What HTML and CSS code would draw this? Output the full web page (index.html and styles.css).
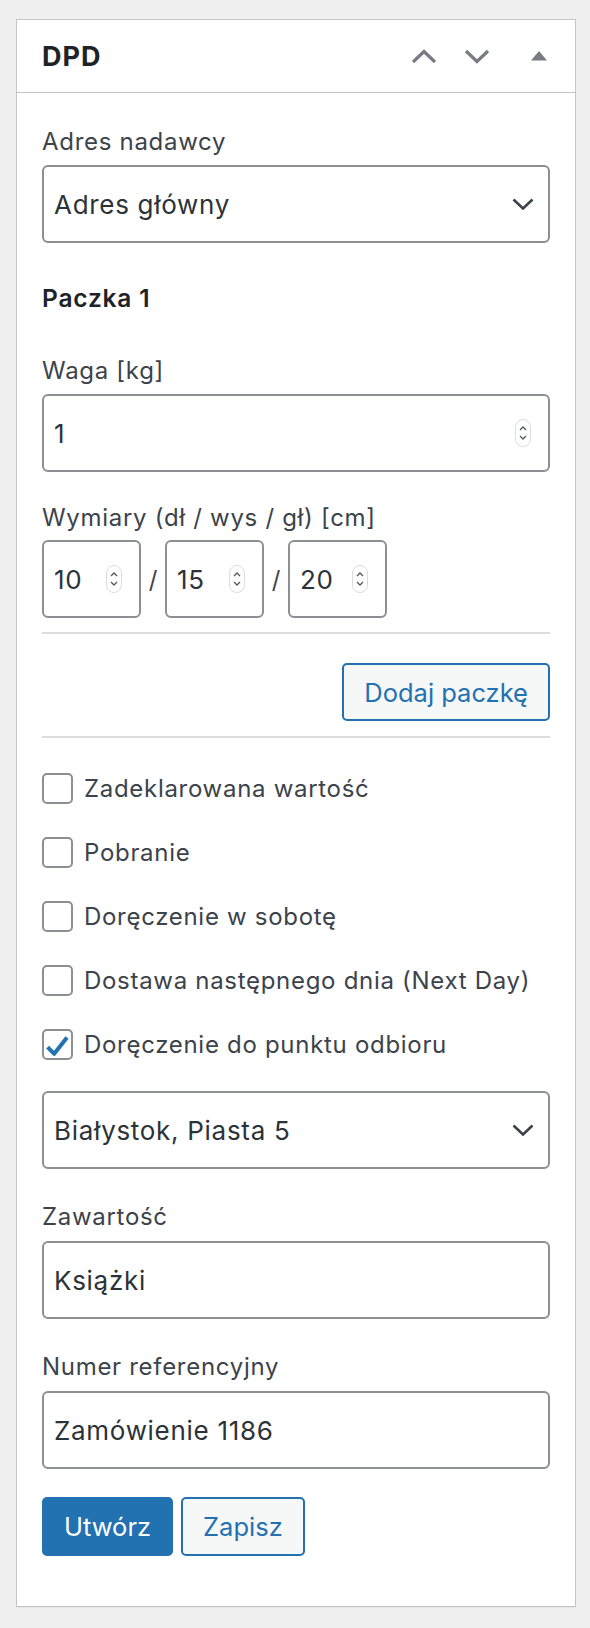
FILE: index.html
```html
<!DOCTYPE html>
<html lang="pl">
<head>
<meta charset="utf-8">
<title>DPD</title>
<link rel="stylesheet" href="styles.css">
</head>
<body>
<div class="postbox">
  <div class="postbox-header">
    <h2 class="postbox-title">DPD</h2>
    <div class="handle-actions">
      <span class="handle-btn handle-higher">
        <svg width="26" height="15" viewBox="0 0 26 15"><polyline points="2,13 13,2.5 24,13" fill="none" stroke="#787c82" stroke-width="3.2"/></svg>
      </span>
      <span class="handle-btn handle-lower">
        <svg width="26" height="15" viewBox="0 0 26 15"><polyline points="2,2 13,12.5 24,2" fill="none" stroke="#787c82" stroke-width="3.2"/></svg>
      </span>
      <span class="handle-btn handle-toggle">
        <svg width="16" height="10" viewBox="0 0 16 10"><polygon points="0,9.5 8,0 16,9.5" fill="#787c82"/></svg>
      </span>
    </div>
  </div>
  <div class="inside">
    <div class="field">
      <div class="field-label">Adres nadawcy</div>
      <div class="control select">
        <span class="control-value">Adres główny</span>
        <svg class="select-arrow" width="22" height="12" viewBox="0 0 22 12"><polyline points="1.5,1.5 11,10.5 20.5,1.5" fill="none" stroke="#3c434a" stroke-width="2.6"/></svg>
      </div>
    </div>

    <h4 class="package-title">Paczka 1</h4>

    <div class="field">
      <div class="field-label">Waga [kg]</div>
      <div class="control number">
        <span class="control-value">1</span>
        <svg class="spinner" width="16" height="28" viewBox="0 0 16 28"><rect x="0.5" y="0.5" width="15" height="27" rx="7.5" fill="#fff" stroke="#dcdcde"/><polyline points="5,11 8,8 11,11" fill="none" stroke="#50575e" stroke-width="1.3"/><polyline points="5,17 8,20 11,17" fill="none" stroke="#50575e" stroke-width="1.3"/></svg>
      </div>
    </div>

    <div class="field field-dims">
      <div class="field-label">Wymiary (dł / wys / gł) [cm]</div>
      <div class="dims">
        <div class="control number dim">
          <span class="control-value">10</span>
          <svg class="spinner" width="16" height="28" viewBox="0 0 16 28"><rect x="0.5" y="0.5" width="15" height="27" rx="7.5" fill="#fff" stroke="#dcdcde"/><polyline points="5,11 8,8 11,11" fill="none" stroke="#50575e" stroke-width="1.3"/><polyline points="5,17 8,20 11,17" fill="none" stroke="#50575e" stroke-width="1.3"/></svg>
        </div>
        <span class="dim-sep">/</span>
        <div class="control number dim">
          <span class="control-value">15</span>
          <svg class="spinner" width="16" height="28" viewBox="0 0 16 28"><rect x="0.5" y="0.5" width="15" height="27" rx="7.5" fill="#fff" stroke="#dcdcde"/><polyline points="5,11 8,8 11,11" fill="none" stroke="#50575e" stroke-width="1.3"/><polyline points="5,17 8,20 11,17" fill="none" stroke="#50575e" stroke-width="1.3"/></svg>
        </div>
        <span class="dim-sep">/</span>
        <div class="control number dim">
          <span class="control-value">20</span>
          <svg class="spinner" width="16" height="28" viewBox="0 0 16 28"><rect x="0.5" y="0.5" width="15" height="27" rx="7.5" fill="#fff" stroke="#dcdcde"/><polyline points="5,11 8,8 11,11" fill="none" stroke="#50575e" stroke-width="1.3"/><polyline points="5,17 8,20 11,17" fill="none" stroke="#50575e" stroke-width="1.3"/></svg>
        </div>
      </div>
    </div>

    <hr class="separator separator-top">
    <div class="add-row">
      <span class="button button-secondary">Dodaj paczkę</span>
    </div>
    <hr class="separator separator-bottom">

    <ul class="options">
      <li class="option"><span class="checkbox"></span><span class="option-label">Zadeklarowana wartość</span></li>
      <li class="option"><span class="checkbox"></span><span class="option-label">Pobranie</span></li>
      <li class="option"><span class="checkbox"></span><span class="option-label">Doręczenie w sobotę</span></li>
      <li class="option"><span class="checkbox"></span><span class="option-label">Dostawa następnego dnia (Next Day)</span></li>
      <li class="option"><span class="checkbox is-checked"><svg width="27" height="27" viewBox="0 0 27 27"><polyline points="3.6,16.2 10.2,22.8 23,6.6" fill="none" stroke="#2271b1" stroke-width="4" stroke-linejoin="round"/></svg></span><span class="option-label">Doręczenie do punktu odbioru</span></li>
    </ul>

    <div class="control select select-point">
      <span class="control-value">Białystok, Piasta 5</span>
      <svg class="select-arrow" width="22" height="12" viewBox="0 0 22 12"><polyline points="1.5,1.5 11,10.5 20.5,1.5" fill="none" stroke="#3c434a" stroke-width="2.6"/></svg>
    </div>

    <div class="field field-text">
      <div class="field-label">Zawartość</div>
      <div class="control text"><span class="control-value">Książki</span></div>
    </div>

    <div class="field field-text">
      <div class="field-label">Numer referencyjny</div>
      <div class="control text"><span class="control-value">Zamówienie 1186</span></div>
    </div>

    <div class="form-actions">
      <span class="button button-primary">Utwórz</span>
      <span class="button button-secondary">Zapisz</span>
    </div>
  </div>
</div>
</body>
</html>
```
FILE: styles.css
```css
* {
  box-sizing: border-box;
}

html, body {
  margin: 0;
  padding: 0;
}

body {
  background: #f0f0f1;
  font-family: Inter, "Noto Sans", "Liberation Sans", sans-serif;
  color: #3c434a;
  padding: 19px 14px 21px 16px;
}

.postbox {
  background: #fff;
  border: 1px solid #c3c4c7;
  box-shadow: 0 1px 1px rgba(0, 0, 0, 0.04);
}

/* header */
.postbox-header {
  display: flex;
  align-items: center;
  height: 73px;
  border-bottom: 1px solid #c3c4c7;
}

.postbox-title {
  flex: 1;
  margin: 0;
  padding: 2px 0 0 25px;
  font-size: 27px;
  font-weight: 700;
  letter-spacing: 1px;
  line-height: 32px;
  color: #1d2327;
}

.handle-actions {
  display: flex;
  align-items: center;
  height: 100%;
}

.handle-btn {
  display: flex;
  align-items: center;
  justify-content: center;
  height: 100%;
  width: 53px;
}

.handle-btn svg {
  display: block;
}

.handle-toggle {
  width: 72px;
}

/* content */
.inside {
  padding: 33px 25px 50px 25px;
}

.field-label {
  font-size: 24px;
  letter-spacing: 0.7px;
  line-height: 32px;
  margin-bottom: 7px;
  color: #3c434a;
}

.control {
  display: flex;
  align-items: center;
  height: 78px;
  border: 2px solid #8c8f94;
  border-radius: 6px;
  background: #fff;
  padding: 0 14px 0 10px;
  font-size: 26px;
  letter-spacing: 0.7px;
  color: #2c3338;
}

.control-value {
  flex: 1;
  white-space: nowrap;
}

.select-arrow {
  display: block;
  flex: none;
}

.spinner {
  display: block;
  flex: none;
  margin-right: 3px;
}

.package-title {
  margin: 39px 0 41px;
  font-size: 24.5px;
  letter-spacing: 0.8px;
  line-height: 32px;
  font-weight: 600;
  color: #1d2327;
}

.field-dims {
  margin-top: 30px;
}

.field-dims .field-label {
  margin-bottom: 6px;
}

.dims {
  display: flex;
  align-items: center;
}

.dim {
  width: 99px;
}

.dim-sep {
  width: 24px;
  text-align: center;
  font-size: 24px;
  color: #3c434a;
}

.separator {
  border: 0;
  height: 2px;
  background: #dcdcde;
  margin: 0;
}

.separator-top {
  margin-top: 14px;
}

.add-row {
  display: flex;
  justify-content: flex-end;
  margin-top: 29px;
}

.separator-bottom {
  margin-top: 15px;
}

.button {
  display: inline-flex;
  align-items: center;
  justify-content: center;
  height: 58px;
  padding: 0 20px;
  border: 2px solid #2271b1;
  border-radius: 5px;
  font-size: 25.5px;
  white-space: nowrap;
}

.button-secondary {
  background: #f6f7f7;
  color: #2271b1;
}

.button-primary {
  background: #2271b1;
  color: #fff;
}

.options {
  list-style: none;
  margin: 35px 0 0;
  padding: 0;
}

.option {
  display: flex;
  align-items: center;
  height: 31px;
  margin-bottom: 33px;
}

.option:last-child {
  margin-bottom: 0;
}

.checkbox {
  flex: none;
  width: 31px;
  height: 31px;
  border: 2px solid #8c8f94;
  border-radius: 5px;
  background: #fff;
  margin-right: 11px;
}

.checkbox svg {
  display: block;
}

.option-label {
  font-size: 24px;
  letter-spacing: 0.7px;
  line-height: 32px;
  color: #3c434a;
  white-space: nowrap;
}

.select-point {
  margin-top: 31px;
}

.field-text {
  margin-top: 32px;
}

.field-text .field-label {
  margin-bottom: 8px;
}

.form-actions {
  display: flex;
  gap: 8px;
  margin-top: 28px;
}

.form-actions .button {
  height: 59px;
}
```
